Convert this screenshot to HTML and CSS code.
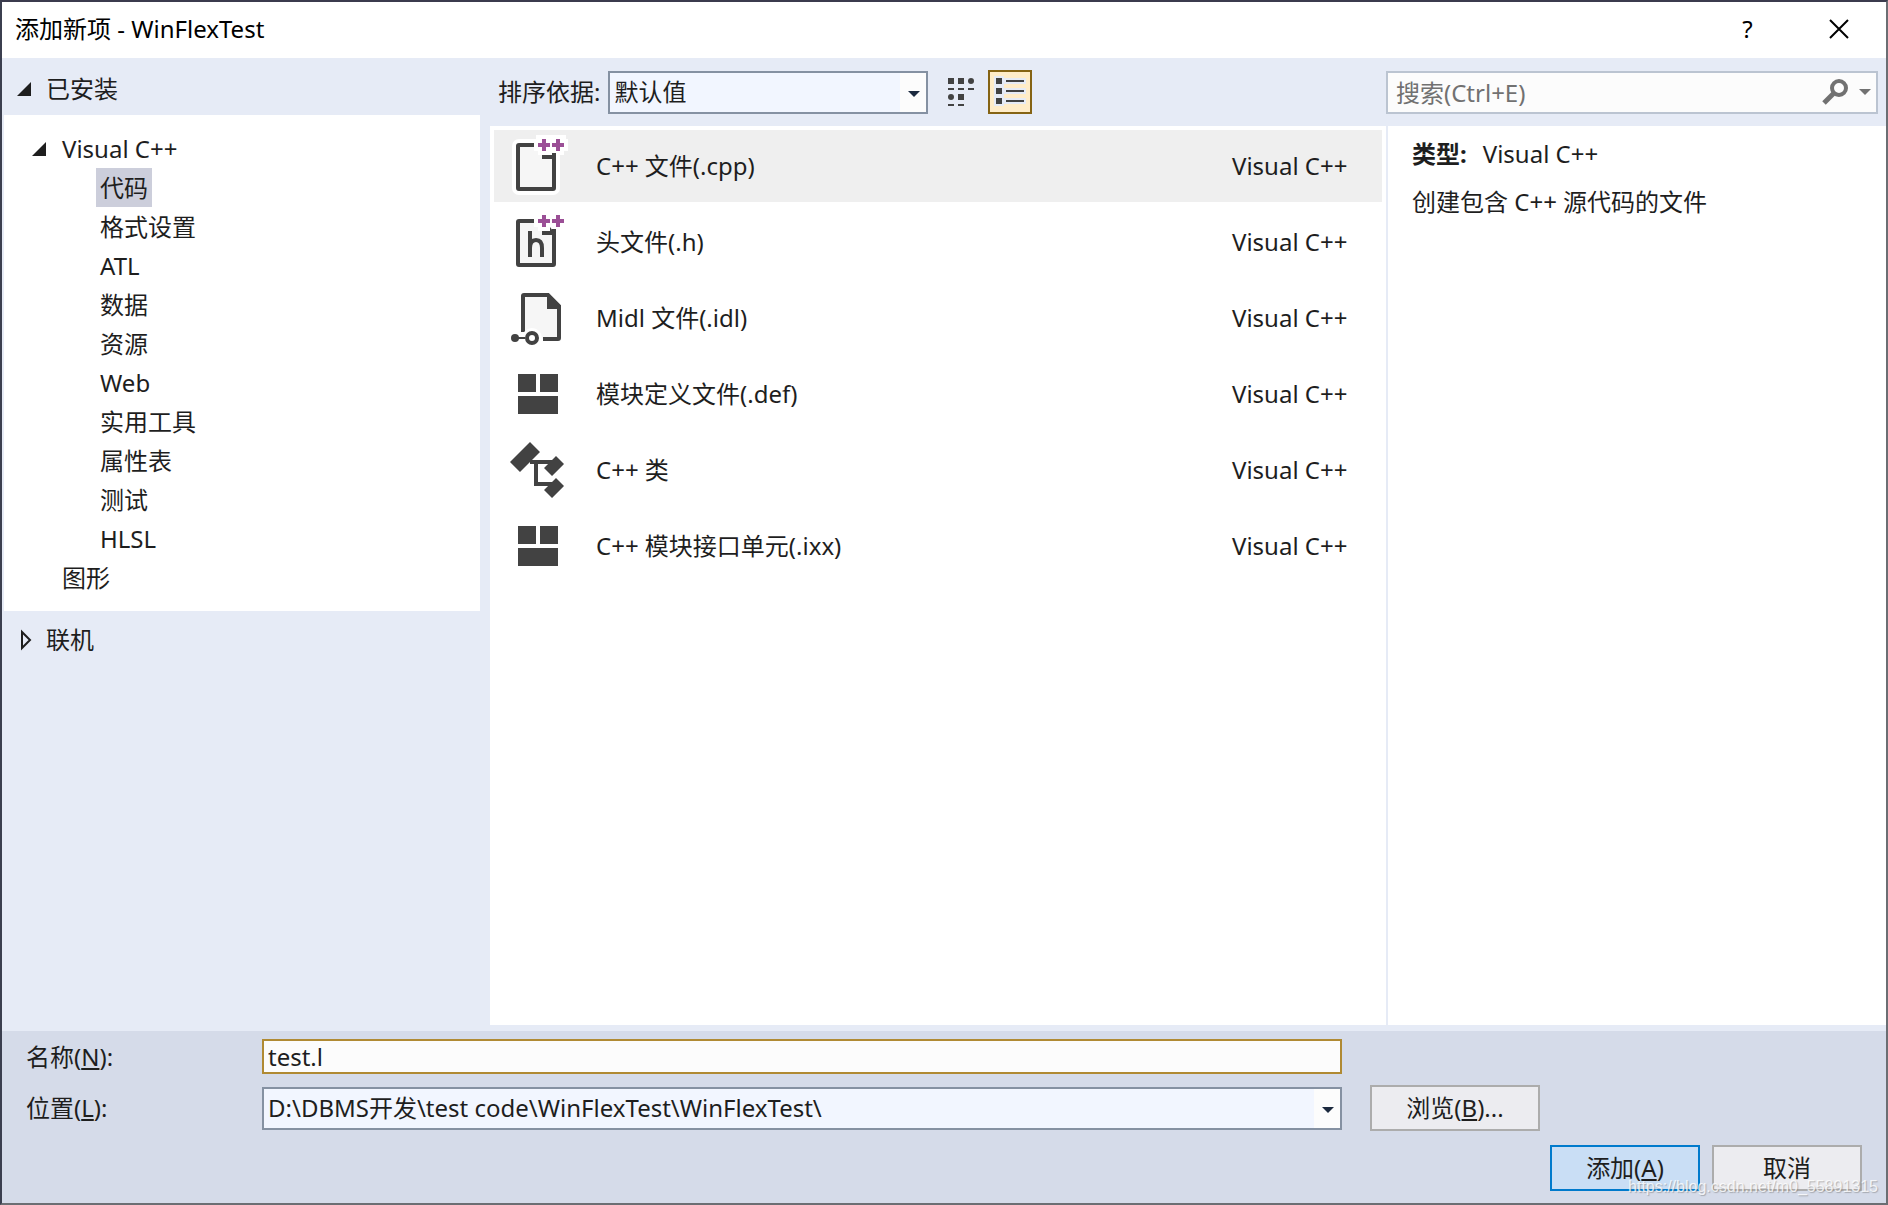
FILE: index.html
```html
<!DOCTYPE html>
<html lang="zh-CN">
<head>
<meta charset="utf-8">
<title>添加新项 - WinFlexTest</title>
<link rel="stylesheet" href="styles.css">
</head>
<body>
<svg class="defs" aria-hidden="true">
  <symbol id="plusplus" viewBox="0 0 26 12">
    <path d="M4 0h4v4h4v4H8v4H4V8H0V4h4zM18 0h4v4h4v4h-4v4h-4V8h-4V4h4z"/>
  </symbol>
  <symbol id="module" viewBox="0 0 56 56">
    <path fill="#424242" d="M8 8h18v18H8zM30 8h18v18H30zM8 30h40v18H8z"/>
  </symbol>
</svg>
<div class="dialog">
  <header class="titlebar">
    <h1>添加新项 - WinFlexTest</h1>
    <button class="caption help" aria-label="帮助">?</button>
    <button class="caption" aria-label="关闭"><svg width="20" height="20" viewBox="0 0 20 20"><path d="M1 1l18 18M19 1L1 19" stroke="#000" stroke-width="2" fill="none"/></svg></button>
  </header>

  <div class="main">
    <nav class="sidebar">
      <div class="root"><svg width="14" height="14" viewBox="0 0 14 14"><path d="M14 0v14H0z" fill="#1e1e1e"/></svg><span>已安装</span></div>
      <ul class="tree">
        <li class="branch"><svg width="14" height="14" viewBox="0 0 14 14"><path d="M14 0v14H0z" fill="#1e1e1e"/></svg><span>Visual C++</span></li>
        <li class="leaf"><span class="current">代码</span></li>
        <li class="leaf"><span>格式设置</span></li>
        <li class="leaf"><span>ATL</span></li>
        <li class="leaf"><span>数据</span></li>
        <li class="leaf"><span>资源</span></li>
        <li class="leaf"><span>Web</span></li>
        <li class="leaf"><span>实用工具</span></li>
        <li class="leaf"><span>属性表</span></li>
        <li class="leaf"><span>测试</span></li>
        <li class="leaf"><span>HLSL</span></li>
        <li class="branch plain"><span>图形</span></li>
      </ul>
      <div class="root"><svg width="14" height="20" viewBox="0 0 14 20"><path d="M5 2v16l8-8z" stroke="#1e1e1e" stroke-width="2" fill="none"/></svg><span>联机</span></div>
    </nav>

    <div class="content">
      <div class="toolbar">
        <label for="sort">排序依据:</label>
        <div class="combo sort"><select id="sort"><option>默认值</option></select><svg class="arrow" width="12" height="6" viewBox="0 0 12 6"><path d="M0 0h12L6 6z" fill="#1b293e"/></svg></div>
        <button class="view" aria-label="小图标">
          <svg width="26" height="28" viewBox="0 0 26 28" fill="#424242"><path d="M0 0h6v6H0zM10 0h6v6h-6zM0 10h6v2H0zM10 10h6v2h-6zM20 10h6v2h-6zM10 16h6v6h-6zM0 26h6v2H0zM10 26h6v2h-6z"/><circle cx="23" cy="3" r="3"/><circle cx="3" cy="19" r="3"/></svg>
        </button>
        <button class="view active" aria-label="列表">
          <svg width="28" height="28" viewBox="0 0 28 28"><path fill="#e6ebf6" d="M-2-2H8V28H-2zM8 0h22v6H8zM8 10h22v6H8zM8 20h22v6H8z"/><path fill="#424242" d="M0 0h6v6H0zM0 10h6v6H0zM0 20h6v6H0zM10 2h18v2H10zM10 12h18v2H10zM10 22h18v2H10z"/></svg>
        </button>
        <div class="search">
          <input type="search" aria-label="搜索" placeholder="搜索(Ctrl+E)">
          <svg width="28" height="28" viewBox="0 0 28 28"><circle cx="18" cy="10" r="7" stroke="#717171" stroke-width="4" fill="none"/><path d="M13 15L3 25" stroke="#717171" stroke-width="5"/></svg>
          <svg width="12" height="6" viewBox="0 0 12 6"><path d="M0 0h12L6 6z" fill="#717171"/></svg>
        </div>
      </div>
      <div class="panes">
        <ul class="items">
          <li class="selected">
            <svg class="icon" viewBox="0 0 56 56"><rect x="2" y="1" width="48" height="56" rx="7" fill="#fff"/><path d="M26-3h30v4h2v12h-4v4H26z" fill="#fff"/><rect x="8" y="7" width="36" height="44" rx="1" fill="#f6f6f6" stroke="#424242" stroke-width="4"/><path d="M24 1h30v14H42v2H28v-4h-4z" fill="#fff"/><path d="M32 17h12q2 0 2 2v2H32z" fill="#424242"/><use href="#plusplus" x="28" y="1" width="26" height="12" fill="#9b4f96"/></svg>
            <span class="name">C++ 文件(.cpp)</span><span class="lang">Visual C++</span>
          </li>
          <li>
            <svg class="icon" viewBox="0 0 56 56"><rect x="8" y="7" width="36" height="44" rx="1" fill="#f6f6f6" stroke="#424242" stroke-width="4"/><path d="M24 1h30v14H42v2H28v-4h-4z" fill="#fff"/><path d="M32 17h8v-4l3 4h1q2 0 2 2v2H32z" fill="#424242"/><path d="M20 17v26M20 34q0-8 6-8 6 0 6 8v9" fill="none" stroke="#424242" stroke-width="4"/><use href="#plusplus" x="28" y="1" width="26" height="12" fill="#9b4f96"/></svg>
            <span class="name">头文件(.h)</span><span class="lang">Visual C++</span>
          </li>
          <li>
            <svg class="icon" viewBox="0 0 56 56"><path d="M13 42V6q0-1 1-1h24l11 11v32q0 1-1 1H33" fill="#f6f6f6" stroke="#424242" stroke-width="4"/><path d="M37 4h2l12 12v3H37z" fill="#424242"/><circle cx="22" cy="48" r="10" fill="#fff"/><path d="M5 47h10v2H5z" fill="#424242"/><circle cx="5" cy="48" r="4" fill="#424242"/><circle cx="22" cy="48" r="5" fill="#fff" stroke="#424242" stroke-width="4"/></svg>
            <span class="name">Midl 文件(.idl)</span><span class="lang">Visual C++</span>
          </li>
          <li>
            <svg class="icon" viewBox="0 0 56 56"><use href="#module"/></svg>
            <span class="name">模块定义文件(.def)</span><span class="lang">Visual C++</span>
          </li>
          <li>
            <svg class="icon" viewBox="0 0 56 56"><path d="M20 0L30 10 10 30 0 20zM46 14l8 8-12 12-8-8zM46 36l8 8-12 12-8-8z" fill="#424242"/><path d="M20 20h22M26 20v22h16" fill="none" stroke="#424242" stroke-width="4"/></svg>
            <span class="name">C++ 类</span><span class="lang">Visual C++</span>
          </li>
          <li>
            <svg class="icon" viewBox="0 0 56 56"><use href="#module"/></svg>
            <span class="name">C++ 模块接口单元(.ixx)</span><span class="lang">Visual C++</span>
          </li>
        </ul>
        <aside class="details">
          <p><b>类型:</b>Visual C++</p>
          <p>创建包含 C++ 源代码的文件</p>
        </aside>
      </div>
    </div>
  </div>

  <form class="footer">
    <label for="name">名称(<u>N</u>):</label>
    <input id="name" class="name-input" type="text" value="test.l">
    <label class="second" for="location">位置(<u>L</u>):</label>
    <div class="combo location"><select id="location"><option>D:\DBMS开发\test code\WinFlexTest\WinFlexTest\</option></select><svg class="arrow" width="12" height="6" viewBox="0 0 12 6"><path d="M0 0h12L6 6z" fill="#1b293e"/></svg></div>
    <button class="btn browse" type="button">浏览(<u>B</u>)...</button>
    <div class="actions">
      <button class="btn primary" type="button">添加(<u>A</u>)</button>
      <button class="btn" type="button">取消</button>
    </div>
  </form>
  <div class="watermark">https://blog.csdn.net/m0_55891315</div>
</div>
</body>
</html>
```
FILE: styles.css
```css
* { box-sizing: border-box; }

html, body { height: 100%; }

body {
  margin: 0;
  font: 24px/32px "Noto Sans", "Noto Sans CJK SC", sans-serif;
  color: #1e1e1e;
  background: #fff;
}

ul { list-style: none; margin: 0; padding: 0; }
p, h1 { margin: 0; }
svg { flex: none; display: block; overflow: visible; }
button, input, select { font: inherit; color: inherit; margin: 0; border-radius: 0; outline: 0; }
.defs { position: absolute; width: 0; height: 0; }

.dialog {
  position: relative;
  display: flex;
  flex-direction: column;
  min-height: 100%;
  border: 2px solid #6b6e73;
  border-top-color: #3b3b4d;
  border-left-color: #3b3f4f;
  background: #e6ebf6;
}

.titlebar {
  display: flex;
  align-items: center;
  height: 56px;
  padding: 0 2px 2px 13px;
  background: #fff;
  color: #000;
}
.titlebar h1 { flex: 1; font-size: 24px; font-weight: 400; line-height: 32px; }
.caption {
  display: flex;
  align-items: center;
  justify-content: center;
  width: 91px;
  height: 54px;
  padding: 0;
  border: 0;
  background: none;
}

.main { flex: 1; display: flex; }

.sidebar { width: 488px; padding-right: 10px; }
.root {
  display: flex;
  align-items: center;
  gap: 15px;
  height: 57px;
  padding: 4px 0 0 15px;
}
.tree + .root { height: 56px; padding: 2px 0 0 15px; }
.tree { margin-left: 2px; padding: 14px 0; background: #fff; }
.tree li { display: flex; align-items: center; height: 39px; }
.branch { gap: 16px; padding-left: 28px; }
.tree .plain { padding-left: 58px; }
.leaf { padding-left: 92px; }
.leaf span { height: 39px; padding: 4px 4px 3px; }
.leaf .current { background: #cccedb; }

.content { flex: 1; display: flex; flex-direction: column; min-width: 0; padding-bottom: 6px; }
.toolbar {
  display: flex;
  align-items: center;
  height: 68px;
  padding: 0 8px;
}
.combo { position: relative; height: 43px; border: 2px solid #8591a2; background: #f2f6ff; }
.combo::after {
  content: "";
  position: absolute;
  top: 0;
  right: 0;
  width: 26px;
  height: 100%;
  background: #fcfcfc;
}
.combo select {
  width: 100%;
  height: 100%;
  padding: 0 30px 0 4px;
  border: 0;
  background: none;
  appearance: none;
}
.combo .arrow { position: absolute; z-index: 1; top: 18px; right: 6px; pointer-events: none; }
.sort { width: 320px; margin-left: 8px; }
.view {
  display: flex;
  align-items: center;
  justify-content: center;
  width: 46px;
  height: 44px;
  margin-left: 10px;
  padding: 0;
  border: 0;
  background: none;
}
.view.active { width: 44px; margin-left: 4px; border: 2px solid #856313; background: #ffecc8; }
.search {
  display: flex;
  align-items: center;
  gap: 10px;
  width: 492px;
  height: 43px;
  margin-left: auto;
  padding-right: 5px;
  border: 2px solid #bbc4d1;
  background: #fcfcfc;
}
.search input { flex: 1; min-width: 0; height: 39px; padding: 0 8px; border: 0; background: none; }
.search input::placeholder { color: #717171; opacity: 1; }

.panes { flex: 1; display: flex; gap: 2px; }
.items { flex: 1; padding: 4px; background: #fff; }
.items li { display: flex; align-items: center; height: 72px; margin-bottom: 4px; padding-left: 16px; }
.items .selected { background: #efefef; }
.icon { width: 56px; height: 56px; }
.name { flex: 1; padding-left: 30px; }
.lang { width: 150px; }
.details { width: 498px; padding: 12px 24px; background: #fff; }
.details p { margin-bottom: 16px; }
.details b { margin-right: 16px; }

.footer {
  display: grid;
  grid-template-columns: 236px minmax(0, 1080px) 1fr;
  grid-template-rows: 35px 46px auto;
  row-gap: 11px;
  align-items: center;
  padding: 8px 24px 12px;
  background: #d5dbe9;
}
.name-input {
  height: 35px;
  padding: 0 4px;
  border: 2px solid #b08a33;
  background: #fcfcfc;
}
.second { grid-column: 1; }
.btn {
  width: 150px;
  height: 46px;
  padding: 0;
  border: 2px solid #acacac;
  background: #ececf0;
}
.browse { width: 170px; margin-left: 28px; }
.primary { border-color: #007acc; background: #c9def5; }
.actions { grid-column: 1 / -1; display: flex; justify-content: flex-end; gap: 12px; padding-top: 3px; }

.watermark {
  position: absolute;
  right: 8px;
  bottom: 0;
  font: 16px/32px "Liberation Sans", sans-serif;
  color: rgba(255, 255, 255, 0.8);
  text-shadow: 1px 1px 1px rgba(120, 120, 120, 0.5);
  pointer-events: none;
}
```
